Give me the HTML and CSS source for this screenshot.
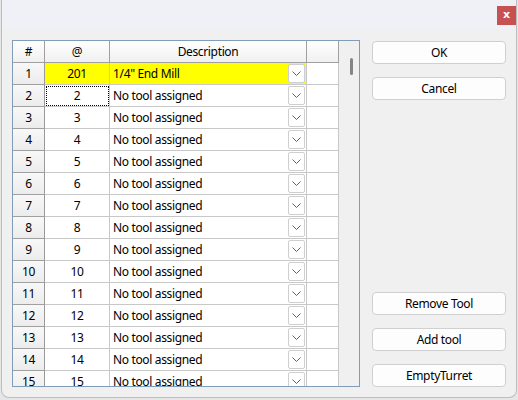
FILE: index.html
```html
<!DOCTYPE html>
<html>
<head>
<meta charset="utf-8">
<link rel="stylesheet" href="styles.css">
</head>
<body>
<div class="window">
  <div class="titlebar"><div class="close">x</div></div>
  <div class="content">
    <div class="grid">
      <div class="table">
        <div class="row head">
          <div class="cell c1 hdr">#</div>
          <div class="cell c2 hdr">@</div>
          <div class="cell c3 hdr">Description</div>
          <div class="cell c4 hdr"></div>
        </div>
        <div class="row">
          <div class="cell c1 rh">1</div>
          <div class="cell c2 num yellow">201</div>
          <div class="cell c3 desc yellow"><span class="txt">1/4" End Mill</span><span class="dd"><svg width="9" height="5" viewBox="0 0 9 5"><path d="M0.5 0.5 L4.5 4.5 L8.5 0.5" fill="none" stroke="#606060" stroke-width="1"/></svg></span></div>
          <div class="cell c4"></div>
        </div>
        <div class="row">
          <div class="cell c1 rh">2</div>
          <div class="cell c2 num focus">2</div>
          <div class="cell c3 desc"><span class="txt">No tool assigned</span><span class="dd"><svg width="9" height="5" viewBox="0 0 9 5"><path d="M0.5 0.5 L4.5 4.5 L8.5 0.5" fill="none" stroke="#606060" stroke-width="1"/></svg></span></div>
          <div class="cell c4"></div>
        </div>
        <div class="row">
          <div class="cell c1 rh">3</div>
          <div class="cell c2 num">3</div>
          <div class="cell c3 desc"><span class="txt">No tool assigned</span><span class="dd"><svg width="9" height="5" viewBox="0 0 9 5"><path d="M0.5 0.5 L4.5 4.5 L8.5 0.5" fill="none" stroke="#606060" stroke-width="1"/></svg></span></div>
          <div class="cell c4"></div>
        </div>
        <div class="row">
          <div class="cell c1 rh">4</div>
          <div class="cell c2 num">4</div>
          <div class="cell c3 desc"><span class="txt">No tool assigned</span><span class="dd"><svg width="9" height="5" viewBox="0 0 9 5"><path d="M0.5 0.5 L4.5 4.5 L8.5 0.5" fill="none" stroke="#606060" stroke-width="1"/></svg></span></div>
          <div class="cell c4"></div>
        </div>
        <div class="row">
          <div class="cell c1 rh">5</div>
          <div class="cell c2 num">5</div>
          <div class="cell c3 desc"><span class="txt">No tool assigned</span><span class="dd"><svg width="9" height="5" viewBox="0 0 9 5"><path d="M0.5 0.5 L4.5 4.5 L8.5 0.5" fill="none" stroke="#606060" stroke-width="1"/></svg></span></div>
          <div class="cell c4"></div>
        </div>
        <div class="row">
          <div class="cell c1 rh">6</div>
          <div class="cell c2 num">6</div>
          <div class="cell c3 desc"><span class="txt">No tool assigned</span><span class="dd"><svg width="9" height="5" viewBox="0 0 9 5"><path d="M0.5 0.5 L4.5 4.5 L8.5 0.5" fill="none" stroke="#606060" stroke-width="1"/></svg></span></div>
          <div class="cell c4"></div>
        </div>
        <div class="row">
          <div class="cell c1 rh">7</div>
          <div class="cell c2 num">7</div>
          <div class="cell c3 desc"><span class="txt">No tool assigned</span><span class="dd"><svg width="9" height="5" viewBox="0 0 9 5"><path d="M0.5 0.5 L4.5 4.5 L8.5 0.5" fill="none" stroke="#606060" stroke-width="1"/></svg></span></div>
          <div class="cell c4"></div>
        </div>
        <div class="row">
          <div class="cell c1 rh">8</div>
          <div class="cell c2 num">8</div>
          <div class="cell c3 desc"><span class="txt">No tool assigned</span><span class="dd"><svg width="9" height="5" viewBox="0 0 9 5"><path d="M0.5 0.5 L4.5 4.5 L8.5 0.5" fill="none" stroke="#606060" stroke-width="1"/></svg></span></div>
          <div class="cell c4"></div>
        </div>
        <div class="row">
          <div class="cell c1 rh">9</div>
          <div class="cell c2 num">9</div>
          <div class="cell c3 desc"><span class="txt">No tool assigned</span><span class="dd"><svg width="9" height="5" viewBox="0 0 9 5"><path d="M0.5 0.5 L4.5 4.5 L8.5 0.5" fill="none" stroke="#606060" stroke-width="1"/></svg></span></div>
          <div class="cell c4"></div>
        </div>
        <div class="row">
          <div class="cell c1 rh">10</div>
          <div class="cell c2 num">10</div>
          <div class="cell c3 desc"><span class="txt">No tool assigned</span><span class="dd"><svg width="9" height="5" viewBox="0 0 9 5"><path d="M0.5 0.5 L4.5 4.5 L8.5 0.5" fill="none" stroke="#606060" stroke-width="1"/></svg></span></div>
          <div class="cell c4"></div>
        </div>
        <div class="row">
          <div class="cell c1 rh">11</div>
          <div class="cell c2 num">11</div>
          <div class="cell c3 desc"><span class="txt">No tool assigned</span><span class="dd"><svg width="9" height="5" viewBox="0 0 9 5"><path d="M0.5 0.5 L4.5 4.5 L8.5 0.5" fill="none" stroke="#606060" stroke-width="1"/></svg></span></div>
          <div class="cell c4"></div>
        </div>
        <div class="row">
          <div class="cell c1 rh">12</div>
          <div class="cell c2 num">12</div>
          <div class="cell c3 desc"><span class="txt">No tool assigned</span><span class="dd"><svg width="9" height="5" viewBox="0 0 9 5"><path d="M0.5 0.5 L4.5 4.5 L8.5 0.5" fill="none" stroke="#606060" stroke-width="1"/></svg></span></div>
          <div class="cell c4"></div>
        </div>
        <div class="row">
          <div class="cell c1 rh">13</div>
          <div class="cell c2 num">13</div>
          <div class="cell c3 desc"><span class="txt">No tool assigned</span><span class="dd"><svg width="9" height="5" viewBox="0 0 9 5"><path d="M0.5 0.5 L4.5 4.5 L8.5 0.5" fill="none" stroke="#606060" stroke-width="1"/></svg></span></div>
          <div class="cell c4"></div>
        </div>
        <div class="row">
          <div class="cell c1 rh">14</div>
          <div class="cell c2 num">14</div>
          <div class="cell c3 desc"><span class="txt">No tool assigned</span><span class="dd"><svg width="9" height="5" viewBox="0 0 9 5"><path d="M0.5 0.5 L4.5 4.5 L8.5 0.5" fill="none" stroke="#606060" stroke-width="1"/></svg></span></div>
          <div class="cell c4"></div>
        </div>
        <div class="row">
          <div class="cell c1 rh">15</div>
          <div class="cell c2 num">15</div>
          <div class="cell c3 desc"><span class="txt">No tool assigned</span><span class="dd"><svg width="9" height="5" viewBox="0 0 9 5"><path d="M0.5 0.5 L4.5 4.5 L8.5 0.5" fill="none" stroke="#606060" stroke-width="1"/></svg></span></div>
          <div class="cell c4"></div>
        </div>
      </div>
      <div class="scrollbar"><div class="thumb"></div></div>
    </div>
    <div class="buttons">
      <div class="group">
        <div class="btn">OK</div>
        <div class="btn">Cancel</div>
      </div>
      <div class="group">
        <div class="btn">Remove Tool</div>
        <div class="btn">Add tool</div>
        <div class="btn">EmptyTurret</div>
      </div>
    </div>
  </div>
</div>
</body>
</html>
```
FILE: styles.css
```css
html, body {
  margin: 0;
  padding: 0;
}
body {
  width: 518px;
  height: 400px;
  overflow: hidden;
  background: #e6e6e6;
  font-family: "Noto Sans", "Open Sans", sans-serif;
  font-size: 12px;
  letter-spacing: -0.35px;
  color: #000;
}
.window {
  box-sizing: border-box;
  margin-left: 1px;
  width: 516px;
  height: 398px;
  border: 1px solid #bdbdbd;
  border-top: none;
  border-radius: 0 0 8px 8px;
  overflow: hidden;
  display: flex;
  flex-direction: column;
  background: #f0f0f0;
}
.titlebar {
  height: 29px;
  flex: none;
  background: #eff1f7;
  display: flex;
  justify-content: flex-end;
  align-items: flex-start;
}
.close {
  margin-top: 6px;
  width: 19px;
  height: 19px;
  background: #c75050;
  color: #fff;
  font-weight: bold;
  font-size: 11px;
  letter-spacing: 0;
  line-height: 17px;
  text-align: center;
  font-family: "DejaVu Sans", sans-serif;
}
.content {
  flex: 1;
  display: flex;
  padding: 11px 0 0 10px;
  gap: 12px;
  align-items: flex-start;
}
.grid {
  box-sizing: border-box;
  width: 348px;
  height: 347px;
  border: 1px solid #7f9db9;
  background: #fff;
  display: flex;
  overflow: hidden;
  flex: none;
}
.table {
  width: 326px;
  flex: none;
}
.row {
  display: flex;
  height: 22px;
}
.cell {
  box-sizing: border-box;
  height: 22px;
  border-right: 1px solid #c8c8c8;
  border-bottom: 1px solid #c8c8c8;
  display: flex;
  align-items: center;
  justify-content: center;
  white-space: nowrap;
  overflow: hidden;
  position: relative;
}
.c1 { width: 32px; border-right-color: #9a9a9a; }
.c2 { width: 65px; }
.c3 { width: 197px; }
.c4 { width: 32px; }
.hdr {
  background: linear-gradient(#ffffff, #f0f0f0);
  border-right-color: #a0a0a0;
  border-bottom-color: #a0a0a0;
}
.rh {
  background: linear-gradient(#f8f8f8, #ececec);
  border-bottom-color: #a0a0a0;
}
.yellow {
  background: #ffff00;
}
.desc {
  justify-content: space-between;
  padding-left: 3px;
  padding-right: 1px;
}
.dd {
  box-sizing: border-box;
  width: 17px;
  height: 19px;
  border: 1px solid #cfcfcf;
  border-radius: 2px;
  background: #fff;
  display: flex;
  align-items: center;
  justify-content: center;
}
.focus::after {
  content: "";
  position: absolute;
  left: 1px;
  top: 1px;
  right: 0;
  bottom: 0;
  border: 1px dotted #000;
}
.scrollbar {
  flex: 1;
  background: #f0f0f0;
  padding: 17px 0 0 11px;
}
.thumb {
  width: 3px;
  height: 17px;
  background: #858585;
  border-radius: 2px;
}
.buttons {
  height: 347px;
  padding-top: 1px;
  box-sizing: border-box;
  display: flex;
  flex-direction: column;
  justify-content: space-between;
}
.group {
  display: flex;
  flex-direction: column;
  gap: 13px;
}
.btn {
  box-sizing: border-box;
  width: 134px;
  height: 23px;
  border: 1px solid #d0d0d0;
  border-radius: 4px;
  background: #fdfdfd;
  display: flex;
  align-items: center;
  justify-content: center;
}
```
